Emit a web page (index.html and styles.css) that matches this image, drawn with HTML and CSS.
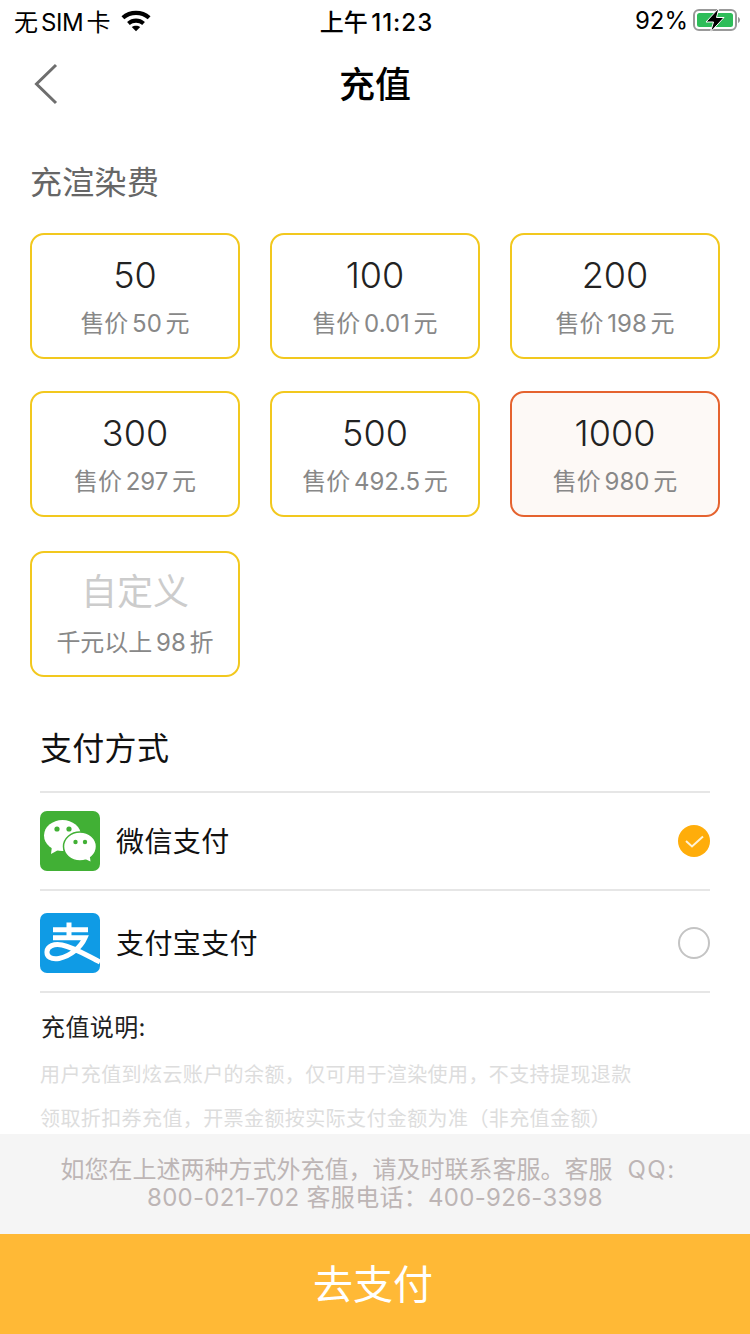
FILE: index.html
```html
<!DOCTYPE html>
<html lang="zh-CN">
<head>
<meta charset="utf-8">
<title>充值</title>
<link rel="stylesheet" href="styles.css">
</head>
<body>
<div class="page">
  <header class="status">
    <div class="status-left">
      <span>无 SIM 卡</span>
      <svg class="wifi" width="30" height="24" viewBox="0 0 32 24"><path d="M0.500 8C9 0.200 23 0.200 31.500 8L28.500 11.300C21.500 5 10.500 5 3.500 11.300Z" fill="#000"/><path d="M6.500 14C12 9.200 20 9.200 25.500 14L22.600 17.200C18.800 14 13.200 14 9.400 17.200Z" fill="#000"/><path d="M11.500 19.500C14 17.500 18 17.500 20.500 19.500L16 24Z" fill="#000"/></svg>
    </div>
    <div class="status-time">上午 <span class="time-num">11:23</span></div>
    <div class="status-right">
      <span>92%</span>
      <svg width="48" height="26" viewBox="0 0 48 26"><rect x="1" y="3" width="42" height="20" rx="5" fill="none" stroke="#999" stroke-width="2"/><rect x="4" y="6" width="36" height="14" rx="2.500" fill="#2ebd59"/><path d="M45 10v6c1.300-.5 2-1.600 2-3s-.7-2.500-2-3z" fill="#999"/><path d="M26 1 L13 15 H20.500 L17.500 25 L31 10.500 H23.500 Z" fill="#000" stroke="#fff" stroke-width="1"/></svg>
    </div>
  </header>
  <nav class="nav">
    <svg class="back" width="26" height="42" viewBox="0 0 26 42"><path d="M23 2 L3.500 21 L23 40" fill="none" stroke="#6e6e6e" stroke-width="3"/></svg>
    <h1 class="title">充值</h1>
  </nav>
  <main class="main">
    <h2 class="section-label">充渲染费</h2>
    <div class="grid">
      <div class="card"><div class="amount">50</div><div class="price">售价 50 元</div></div>
      <div class="card"><div class="amount">100</div><div class="price">售价 0.01 元</div></div>
      <div class="card"><div class="amount">200</div><div class="price">售价 198 元</div></div>
      <div class="card"><div class="amount">300</div><div class="price">售价 297 元</div></div>
      <div class="card"><div class="amount">500</div><div class="price">售价 492.5 元</div></div>
      <div class="card selected"><div class="amount">1000</div><div class="price">售价 980 元</div></div>
      <div class="card custom"><div class="amount">自定义</div><div class="price">千元以上 98 折</div></div>
    </div>
    <section class="pay">
      <h2 class="pay-title">支付方式</h2>
      <div class="pay-row wx">
        <svg class="pay-icon" width="60" height="60" viewBox="0 0 60 60"><rect width="60" height="60" rx="7" fill="#41b035"/><ellipse cx="22.500" cy="24.500" rx="18.500" ry="15.500" fill="#fff"/><path d="M12 35L11 43L20 38Z" fill="#fff"/><ellipse cx="40" cy="35.500" rx="16.500" ry="14.500" fill="#fff" stroke="#41b035" stroke-width="1.500"/><path d="M44 47.500L50.500 50.500L49.500 43Z" fill="#fff"/><circle cx="17" cy="18" r="2.600" fill="#41b035"/><circle cx="29" cy="18" r="2.600" fill="#41b035"/><circle cx="35.500" cy="31" r="2.200" fill="#41b035"/><circle cx="45" cy="31" r="2.200" fill="#41b035"/></svg>
        <span class="pay-name">微信支付</span>
        <svg class="radio" width="32" height="32" viewBox="0 0 32 32"><circle cx="16" cy="16" r="16" fill="#ffad0a"/><path d="M8 16L14 21.500L25 11.500" fill="none" stroke="#fff3d6" stroke-width="2"/></svg>
      </div>
      <div class="pay-row ali">
        <svg class="pay-icon" width="60" height="60" viewBox="0 0 60 60"><rect width="60" height="60" rx="7" fill="#0f9be5"/><path d="M13 16.700H48M29 9.500V25M13 24.800H45C41 34 31 43 19 45.500C11 47 6.500 43.500 7 38.500C7.500 33 14 30.500 22 32C34 34.500 46 42 60 49" fill="none" stroke="#fff" stroke-width="5"/></svg>
        <span class="pay-name">支付宝支付</span>
        <svg class="radio" width="32" height="32" viewBox="0 0 32 32"><circle cx="16" cy="16" r="15" fill="#fff" stroke="#c4c4c4" stroke-width="2"/></svg>
      </div>
    </section>
    <section class="notes">
      <h3 class="notes-title">充值说明:</h3>
      <p class="note">用户充值到炫云账户的余额，仅可用于渲染使用，不支持提现退款</p>
      <p class="note">领取折扣券充值，开票金额按实际支付金额为准（非充值金额）</p>
    </section>
  </main>
  <div class="contact">如您在上述两种方式外充值，请及时联系客服。客服<span class="qq">QQ:</span><br><span class="contact-line">800-021-702 客服电话：400-926-3398</span></div>
  <button class="go">去支付</button>
</div>
</body>
</html>
```
FILE: styles.css
```css
* { box-sizing: border-box; }
html, body { margin: 0; padding: 0; }
body {
  width: 750px;
  height: 1334px;
  overflow: hidden;
  background: #fff;
  font-family: Inter, "Noto Sans CJK SC", sans-serif;
  color: #000;
}
.page { display: flex; flex-direction: column; height: 1334px; }
.status {
  height: 40px;
  flex: none;
  display: grid;
  grid-template-columns: 1fr auto 1fr;
  align-items: center;
  padding: 0 9px 0 14px;
  font-size: 24px;
  word-spacing: -3px;
}
.status-left { display: flex; align-items: center; gap: 11px; }
.status-left span { letter-spacing: -0.4px; }
.status-time { font-weight: 500; word-spacing: -3px; position: relative; left: -1px; }
.time-num { letter-spacing: 1px; }
.status-right { display: flex; align-items: center; justify-content: flex-end; gap: 5px; }
.nav {
  height: 88px;
  flex: none;
  display: flex;
  align-items: center;
  justify-content: center;
  position: relative;
}
.back { position: absolute; left: 33px; top: 23px; }
.title { margin: 0; font-size: 36px; font-weight: 500; line-height: 1; position: relative; top: 1px; }
.main { flex: 1; min-height: 0; overflow: hidden; }
.section-label {
  margin: 0 0 28px 30px;
  font-size: 32px;
  font-weight: 400;
  color: #666;
  height: 77px;
  padding-top: 33px;
  line-height: 44px;
  letter-spacing: 0.3px;
}
.grid {
  display: grid;
  grid-template-columns: repeat(3, 210px);
  grid-template-rows: 126px 126px 128px;
  column-gap: 30px;
  row-gap: 32px;
  padding: 0 30px;
}
.card {
  border: 2px solid #f2c81e;
  border-radius: 14px;
  display: flex;
  flex-direction: column;
  align-items: center;
  padding-top: 17px;
}
.card.custom { align-self: end; height: 126px; }
.amount { font-size: 36px; line-height: 46px; font-weight: 300; color: #222; }
.price { font-size: 24px; line-height: 32px; margin-top: 10px; color: #888; word-spacing: -3px; }
.selected { border-color: #e5632f; background: #fdf9f6; }
.custom .amount { color: #ccc; font-weight: 400; margin-top: -1px; }
.custom .price { margin-top: 12px; }
.pay { margin: 50px 40px 0; }
.pay-title {
  margin: 0;
  font-size: 32px;
  font-weight: 400;
  line-height: 44px;
  height: 64px;
  color: #111;
  letter-spacing: 0.3px;
}
.pay-row {
  display: flex;
  align-items: center;
  border-top: 2px solid #e6e6e6;
}
.wx { height: 98px; }
.ali { height: 104px; border-bottom: 2px solid #e6e6e6; padding-top: 4px; }
.pay-icon { flex: none; }
.pay-name { font-size: 28px; margin-left: 16px; flex: 1; color: #111; letter-spacing: 0.4px; padding-bottom: 2px; }
.radio { flex: none; }
.notes { padding: 0 40px; }
.notes-title { margin: 20px 0 0 1px; font-size: 24px; line-height: 30px; font-weight: 400; color: #222; letter-spacing: 0.4px; }
.note { margin: 14px 0 0; font-size: 20px; line-height: 30px; color: #ddd; letter-spacing: 0.4px; }
.notes-title + .note { margin-top: 17px; }
.contact {
  height: 100px;
  flex: none;
  background: #f5f5f5;
  color: #bdb5b5;
  font-size: 24px;
  line-height: 28px;
  text-align: center;
  padding-top: 22px;
}
.qq { margin: 0 14px 0 15px; letter-spacing: 1.5px; }
.contact-line { letter-spacing: 0.3px; }
.go {
  height: 100px;
  flex: none;
  display: block;
  width: 100%;
  border: 0;
  background: #ffb936;
  color: #fff;
  font: 400 40px Inter, "Noto Sans CJK SC", sans-serif;
  padding: 0 4px 5px 0;
}
```
